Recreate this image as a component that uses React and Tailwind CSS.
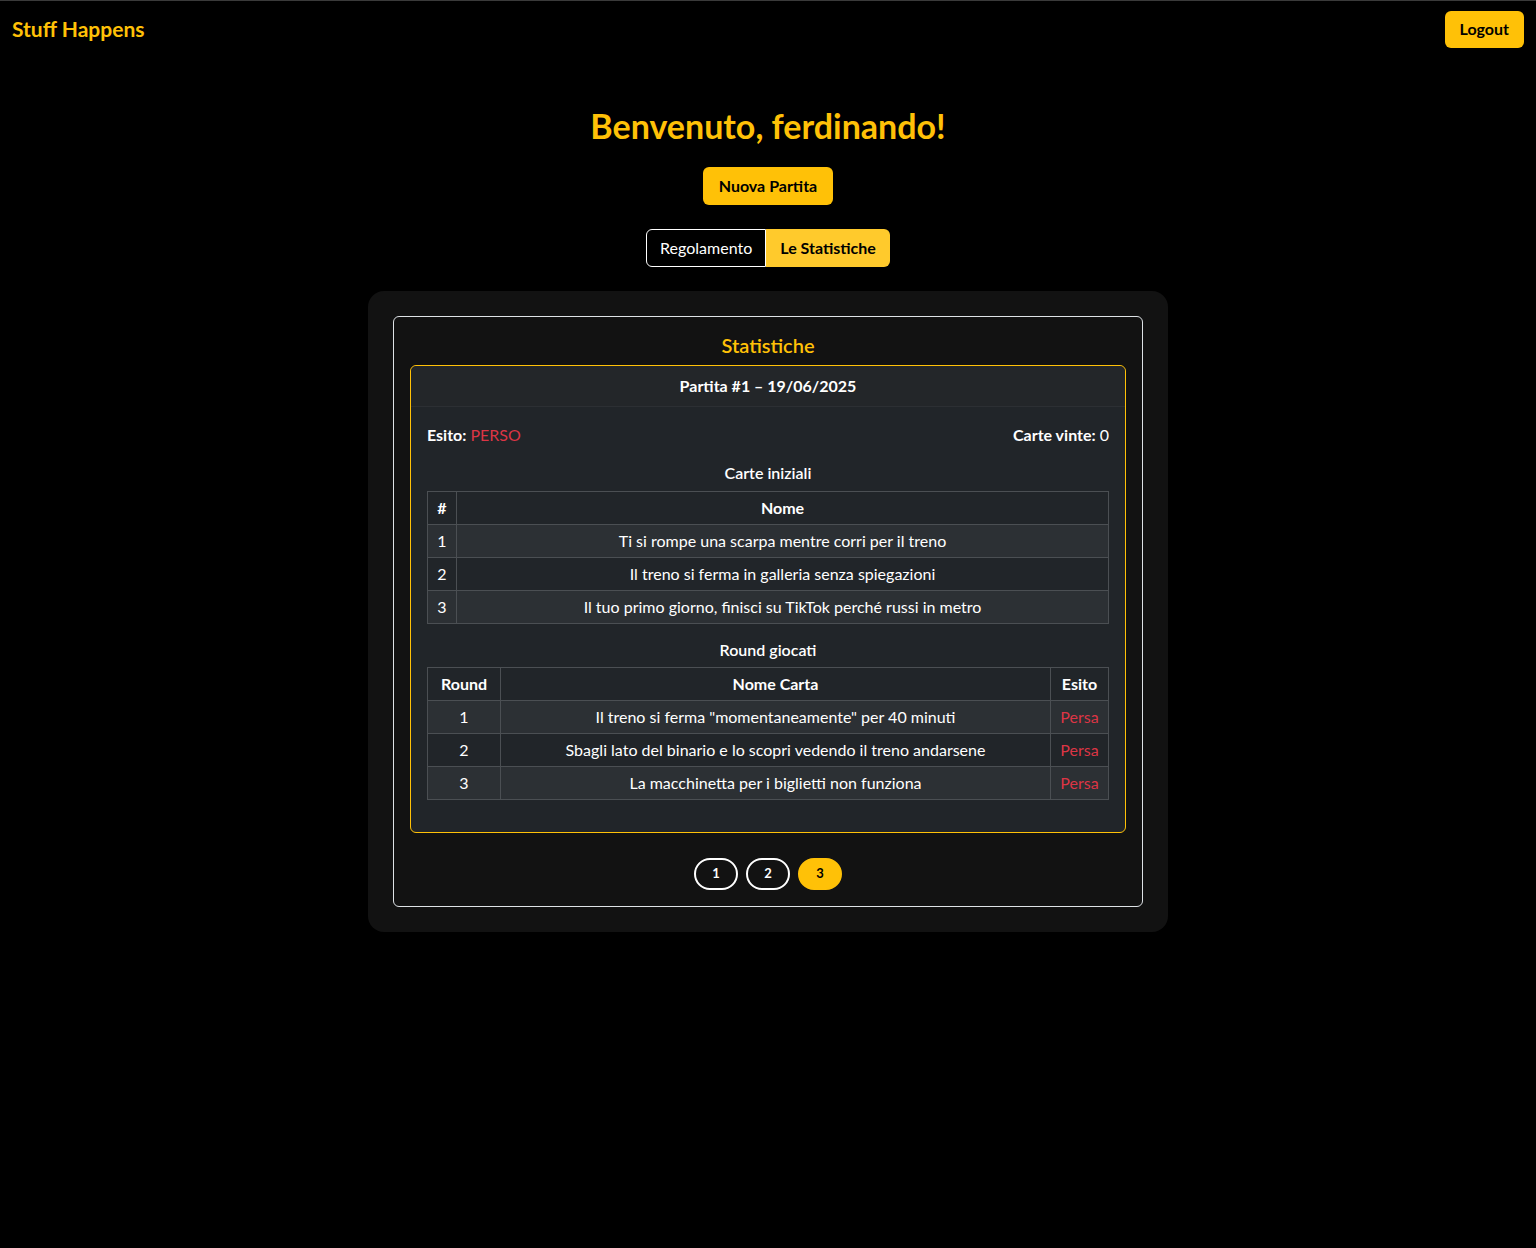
import React, { useState } from 'react';

const iniziali = [
  { id: 1, nome: 'Ti si rompe una scarpa mentre corri per il treno' },
  { id: 2, nome: 'Il treno si ferma in galleria senza spiegazioni' },
  { id: 3, nome: 'Il tuo primo giorno, finisci su TikTok perché russi in metro' },
];

const rounds = [
  { round: 1, nome: 'Il treno si ferma "momentaneamente" per 40 minuti', esito: 'Persa' },
  { round: 2, nome: 'Sbagli lato del binario e lo scopri vedendo il treno andarsene', esito: 'Persa' },
  { round: 3, nome: 'La macchinetta per i biglietti non funziona', esito: 'Persa' },
];

const cell = 'border border-[#4b4f53] px-[4px] py-[4px] leading-6';

const App = () => {
  const [page, setPage] = useState(3);

  return (
    <div className="min-h-[1248px] bg-black text-white border-t border-[#3a3a3a] font-['Lato',sans-serif] text-base">
      {/* navbar */}
      <nav className="h-[56px] flex items-center justify-between px-3">
        <span className="text-[#ffc107] text-[21px] font-bold">Stuff Happens</span>
        <button className="h-[37px] px-[15px] rounded-md bg-[#ffc107] text-black font-bold">Logout</button>
      </nav>

      <main className="flex flex-col items-center">
        <h2 className="mt-[50px] text-[34px] leading-[38px] font-bold text-[#ffc107]">Benvenuto, ferdinando!</h2>

        <button className="mt-[22px] h-[38px] px-[16px] rounded-md bg-[#ffc107] text-black font-bold">Nuova Partita</button>

        <div className="mt-[24px] flex h-[38px]">
          <button className="px-[13px] rounded-l-md border border-white bg-black text-white">Regolamento</button>
          <button className="px-[14px] rounded-r-md bg-[#ffca2c] text-black font-bold">Le Statistiche</button>
        </div>

        <section className="mt-[24px] w-[800px] rounded-2xl bg-[#121212] p-[25px]">
          <div className="rounded-md border border-[#dee2e6] px-4 pt-4 pb-4">
            <h5 className="text-center text-[20px] leading-[1.2] font-semibold text-[#ffc107] mb-2">Statistiche</h5>

            <div className="rounded-md border border-[#ffc107] bg-[#212529]">
              <div className="px-4 py-2 leading-6 text-center font-bold border-b border-[#2c2f33] bg-[#232629] rounded-t-md">
                Partita #1 – 19/06/2025
              </div>
              <div className="p-4">
                <div className="flex justify-between leading-6 mb-4">
                  <span><span className="font-bold">Esito:</span> <span className="text-[#dc3545]">PERSO</span></span>
                  <span><span className="font-bold">Carte vinte:</span> 0</span>
                </div>

                <h6 className="text-center font-semibold leading-[20px] mb-2">Carte iniziali</h6>
                <table className="w-full border-collapse text-center mb-4">
                  <thead>
                    <tr className="bg-[#212529]">
                      <th className={`${cell} w-[29px]`}>#</th>
                      <th className={cell}>Nome</th>
                    </tr>
                  </thead>
                  <tbody>
                    {iniziali.map((c, i) => (
                      <tr key={c.id} className={i % 2 === 0 ? 'bg-[#2c3034]' : 'bg-[#212529]'}>
                        <td className={cell}>{c.id}</td>
                        <td className={cell}>{c.nome}</td>
                      </tr>
                    ))}
                  </tbody>
                </table>

                <h6 className="text-center font-semibold leading-[19px] mb-2">Round giocati</h6>
                <table className="w-full border-collapse text-center mb-4">
                  <thead>
                    <tr className="bg-[#212529]">
                      <th className={`${cell} w-[73px]`}>Round</th>
                      <th className={cell}>Nome Carta</th>
                      <th className={`${cell} w-[58px]`}>Esito</th>
                    </tr>
                  </thead>
                  <tbody>
                    {rounds.map((r, i) => (
                      <tr key={r.round} className={i % 2 === 0 ? 'bg-[#2c3034]' : 'bg-[#212529]'}>
                        <td className={cell}>{r.round}</td>
                        <td className={cell}>{r.nome}</td>
                        <td className={`${cell} text-[#dc3545]`}>{r.esito}</td>
                      </tr>
                    ))}
                  </tbody>
                </table>
              </div>
            </div>

            <div className="mt-[25px] flex justify-center gap-2">
              {[1, 2, 3].map((n) => (
                <button
                  key={n}
                  onClick={() => setPage(n)}
                  className={`w-[44px] h-[32px] rounded-full border-2 text-[13px] font-bold ${
                    page === n ? 'bg-[#ffc107] border-[#ffc107] text-black' : 'bg-transparent border-white text-white'
                  }`}
                >
                  {n}
                </button>
              ))}
            </div>
          </div>
        </section>
      </main>
    </div>
  );
};

export default App;
